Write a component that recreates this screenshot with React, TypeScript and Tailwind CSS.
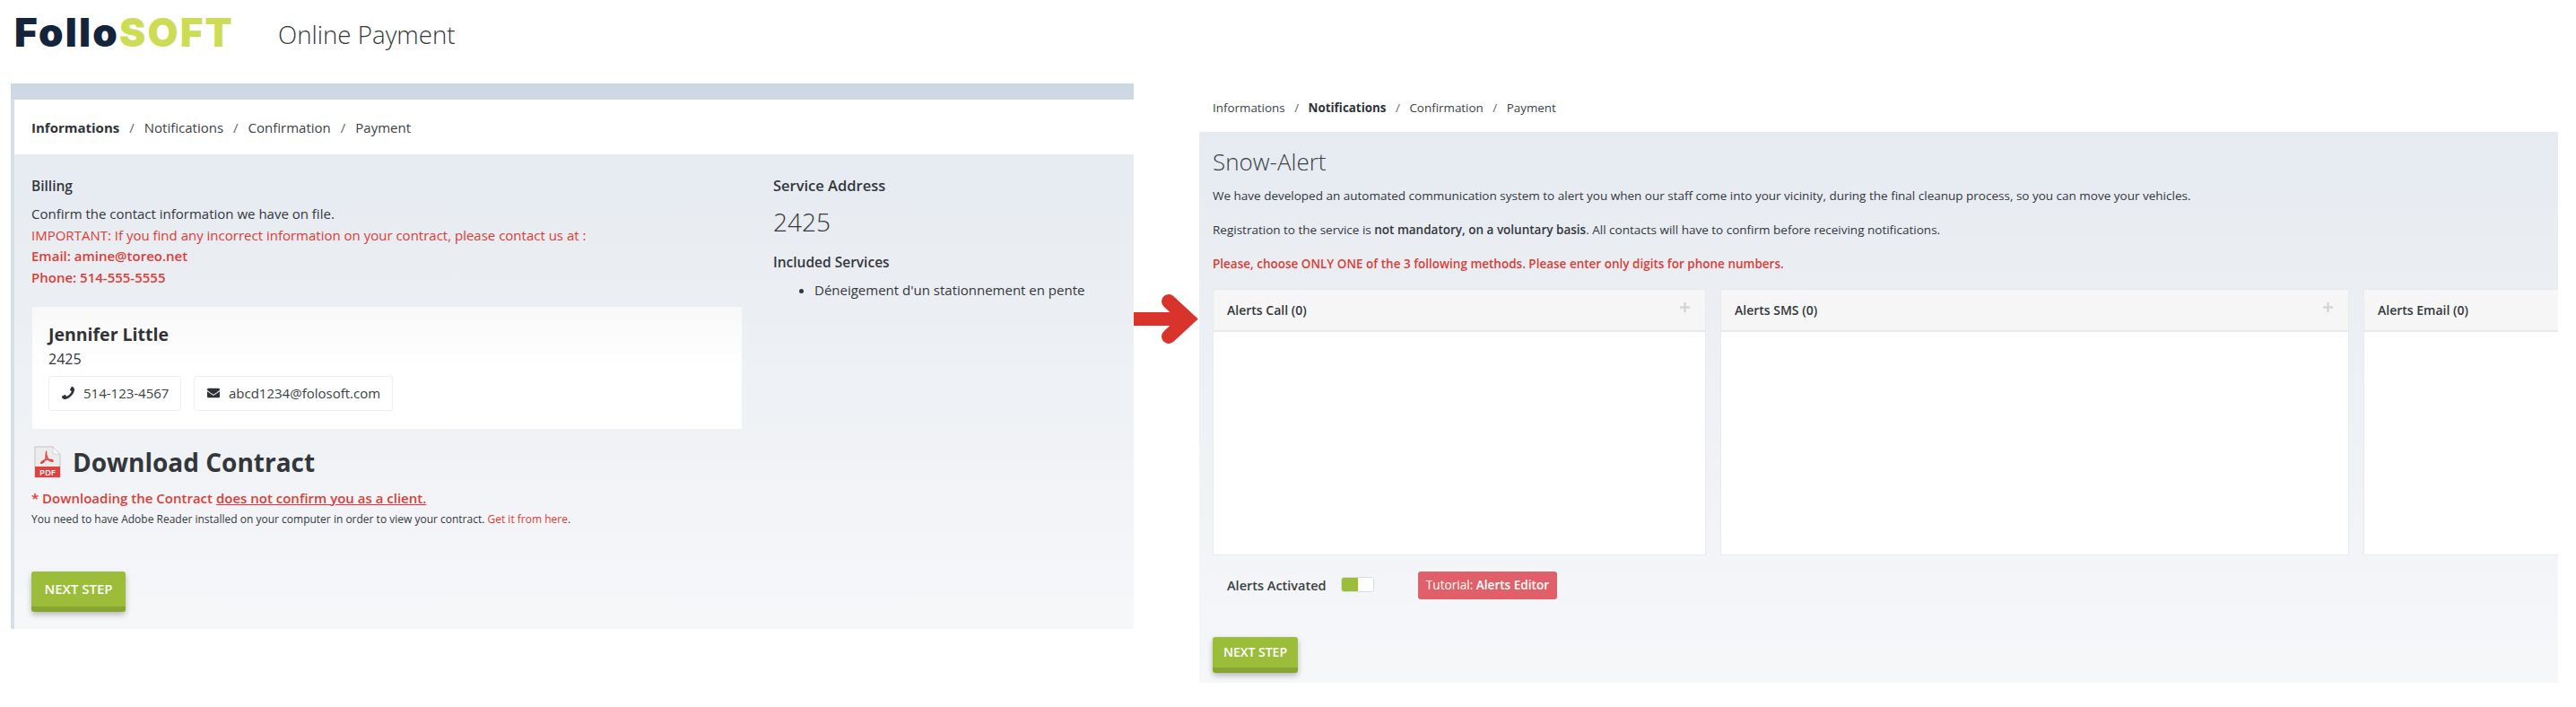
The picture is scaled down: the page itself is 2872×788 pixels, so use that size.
import { FaEnvelope, FaPlus } from "react-icons/fa";

const sans = "font-['Open_Sans','Noto_Sans',sans-serif]";

function Crumbs({ active, small }: { active: number; small?: boolean }) {
  const items = ["Informations", "Notifications", "Confirmation", "Payment"];
  return (
    <div className={(small ? "text-[13.4px]" : "text-[15px]") + " flex items-center leading-5 text-[#3a3f45]"}>
      {items.map((t, i) => (
        <span key={t} className="flex items-center">
          <span className={i === active ? "font-bold text-[#2f3338]" : ""}>{t}</span>
          {i < 3 && <span className={(small ? "mx-[10.5px]" : "mx-[11px]") + " text-[#666]"}>/</span>}
        </span>
      ))}
    </div>
  );
}

function NextStep({ big }: { big?: boolean }) {
  return (
    <button
      className={
        (big ? "w-[105px] h-[45px] text-[15px] pt-[9px] " : "w-[95px] h-[40px] text-[14px] pt-[7px] ") +
        "flex items-start justify-center leading-5 rounded-[3px] bg-[#9bbd3a] border-b-[6px] border-[#86a532] font-semibold text-white shadow-[0_3px_6px_rgba(0,0,0,0.25)]"
      }
    >
      NEXT STEP
    </button>
  );
}

function PhoneIcon() {
  return (
    <svg width="14" height="14" viewBox="0 0 1408 1408" className="text-[#2f3338]">
      <g transform="translate(1408 0) scale(-1 1)">
        <path
          fill="currentColor"
          d="M1408 1112q0 27-10 70.5t-21 68.5q-21 50-122 106-94 51-186 51-27 0-53-3.5t-57.5-12.5-47-14.5-55.5-20.5-49-18q-98-35-175-83-127-79-264-216t-216-264q-48-77-83-175-3-9-18-49t-20.5-55.5-14.5-47-12.5-57.5-3.5-53q0-92 51-186 56-101 106-122 25-11 68.5-21t70.5-10q14 0 21 3 18 6 53 76 11 19 30 54t35 63.5 31 53.5q3 4 17.5 25t21.5 35.5 7 28.5q0 20-28.5 50t-62 55-62 53-28.5 46q0 9 5 22.5t8.5 20.5 14 24 11.5 19q76 137 174 235t235 174q2 1 19 11.5t24 14 20.5 8.5 22.5 5q18 0 46-28.5t53-62 55-62 50-28.5q14 0 28.5 7t35.5 21.5 25 17.5q25 15 53.5 31t63.5 35 54 30q70 35 76 53 3 7 3 21z"
        />
      </g>
    </svg>
  );
}

function PdfIcon() {
  return (
    <svg width="30" height="36" viewBox="0 0 30 36">
      <path d="M1 1h20l8 8v26H1z" fill="#ececec" stroke="#c4c4c4" />
      <path d="M21 1v8h8z" fill="#fafafa" stroke="#c4c4c4" strokeWidth="0.6" />
      <path
        d="M14 6c-1.500 1 0 6-1.500 9.500-1.500 3-4 4.500-5 3.500 1-2 5-4 8.500-4 3 0 5 1 5 2s-4 0-5.500-2.500c-2-3.500-2.500-7.500-1.500-8.500z"
        fill="none"
        stroke="#dc4a46"
        strokeWidth="1.5"
      />
      <rect x="1" y="23" width="28" height="12" fill="#dd4343" />
      <text x="15" y="32.500" textAnchor="middle" fontSize="9.500" fontWeight="600" fill="#fff" fontFamily="Open Sans">PDF</text>
    </svg>
  );
}

function AlertCard({ title, plus, w }: { title: string; plus?: boolean; w: string }) {
  return (
    <div className={w + " shrink-0 bg-white border border-[#e9eaec] flex flex-col h-[297px]"}>
      <div className="h-[47px] bg-[#f6f6f6] border-b-2 border-[#e9eaec] flex items-center justify-between px-[15px]">
        <span className="text-[14px] font-semibold text-[#33373c]">{title}</span>
        {plus && <FaPlus className="text-[#d5d5d5] mb-[6px] mr-[1px]" size={13} />}
      </div>
    </div>
  );
}

export default function App() {
  return (
    <div className={sans + " w-[2872px] h-[788px] bg-white flex items-start pl-3 overflow-hidden"}>
      {/* Left column */}
      <div className="w-[1252px] shrink-0">
        <header className="h-[93px] flex items-start pl-[4px] pt-[12px]">
          <div className="w-[294px] text-[44px] leading-[48px] font-black tracking-[2.2px] font-['Inter',sans-serif]">
            <span className="text-[#14243b]">Follo</span>
            <span className="text-[#cddc55]">SOFT</span>
          </div>
          <div className="text-[27.7px] leading-[48px] font-light text-[#33373c] mt-[2px]">Online Payment</div>
        </header>
        <div className="h-[18px] bg-[#cdd8e4]" />
        <div className="border-l-4 border-[#d6e0ea]">
          <div className="h-[61px] bg-white flex items-center pl-[19px]">
            <Crumbs active={0} />
          </div>
          <div className="h-[529px] bg-gradient-to-b from-[#e6ebf1] via-[#eef1f5] to-[#f6f7f9] flex pl-[19px]">
            <div className="w-[826px] shrink-0 pt-[23px]">
              <div className="text-[15.5px] leading-6 font-semibold text-[#33373c]">Billing</div>
              <div className="mt-[8px] text-[15px] leading-[23.7px] text-[#33373c]">
                <div>Confirm the contact information we have on file.</div>
                <div className="text-[#dc3c36]">IMPORTANT: If you find any incorrect information on your contract, please contact us at :</div>
                <div className="text-[#dc3c36] font-semibold">Email: amine@toreo.net</div>
                <div className="text-[#dc3c36] font-semibold">Phone: 514-555-5555</div>
              </div>
              <div className="mt-[20px] ml-[1px] w-[791px] h-[136px] bg-gradient-to-b from-[#f8f8f8] via-white to-white pl-[18px] pt-[17px]">
                <div className="text-[19.5px] leading-7 font-bold text-[#2f3338]">Jennifer Little</div>
                <div className="text-[16px] leading-6 text-[#33373c] mt-[1px]">2425</div>
                <div className="mt-[7px] flex gap-[14px]">
                  <div className="w-[148px] h-[39px] bg-white border border-[#eeeeee] rounded-[3px] flex items-center pl-[14px] gap-[10px] text-[15px] text-[#3a3f45]">
                    <PhoneIcon />
                    514-123-4567
                  </div>
                  <div className="w-[222px] h-[39px] bg-white border border-[#eeeeee] rounded-[3px] flex items-center pl-[14px] gap-[10px] text-[15px] text-[#3a3f45]">
                    <FaEnvelope size={14} className="text-[#2f3338]" />
                    abcd1234@folosoft.com
                  </div>
                </div>
              </div>
              <div className="mt-[19px] ml-[3px] flex items-center gap-[13px] h-[36px]">
                <PdfIcon />
                <div className="text-[28px] font-bold text-[#33373c] leading-9">Download Contract</div>
              </div>
              <div className="mt-[12px] text-[15px] leading-5 font-semibold text-[#dc3c36]">
                * Downloading the Contract <span className="underline">does not confirm you as a client.</span>
              </div>
              <div className="mt-[5px] text-[12px] leading-[18px] text-[#33373c]">
                You need to have Adobe Reader installed on your computer in order to view your contract.{" "}
                <span className="text-[#dc3c36]">Get it from here</span>.
              </div>
              <div className="mt-[49px]">
                <NextStep big />
              </div>
            </div>
            <div className="pl-[1px] pt-[23px]">
              <div className="text-[16.5px] leading-6 font-semibold text-[#33373c]">Service Address</div>
              <div className="mt-[8px] text-[28px] leading-10 font-light text-[#33373c]">2425</div>
              <div className="mt-[13px] text-[15.5px] leading-6 font-semibold text-[#33373c]">Included Services</div>
              <ul className="mt-[7px] ml-[46px] list-disc text-[15px] leading-6 text-[#33373c]">
                <li>Déneigement d'un stationnement en pente</li>
              </ul>
            </div>
          </div>
        </div>
      </div>

      {/* Arrow */}
      <svg className="shrink-0 mt-[328px]" width="73" height="55" viewBox="0 0 73 55">
        <rect x="0" y="20" width="50" height="15" fill="#d9342b" />
        <path d="M39 8 L60 27.500 L39 47" fill="none" stroke="#d9342b" strokeWidth="16" strokeLinecap="round" strokeLinejoin="miter" />
      </svg>

      {/* Right column */}
      <div className="w-[1515px] shrink-0">
        <div className="h-[147px] pt-[110px] pl-[15px]">
          <Crumbs active={1} small />
        </div>
        <div className="h-[614px] bg-gradient-to-b from-[#e6ebf1] via-[#eef1f5] to-[#f6f7f9] pl-[15px] overflow-hidden">
          <h2 className="pt-[15px] text-[26px] leading-9 font-light text-[#3a3f45]">Snow-Alert</h2>
          <p className="mt-[10px] text-[13.5px] leading-5 text-[#33373c]">
            We have developed an automated communication system to alert you when our staff come into your vicinity, during the final cleanup process, so you can move your vehicles.
          </p>
          <p className="mt-[18px] text-[13.5px] leading-5 text-[#33373c]">
            Registration to the service is <b className="font-semibold">not mandatory, on a voluntary basis</b>. All contacts will have to confirm before receiving notifications.
          </p>
          <p className="mt-[18px] text-[13.5px] leading-5 font-semibold text-[#dc3c36]">
            Please, choose ONLY ONE of the 3 following methods. Please enter only digits for phone numbers.
          </p>
          <div className="mt-[18px] flex gap-[16px]">
            <AlertCard title="Alerts Call (0)" plus w="w-[550px]" />
            <AlertCard title="Alerts SMS (0)" plus w="w-[701px]" />
            <AlertCard title="Alerts Email (0)" w="w-[400px]" />
          </div>
          <div className="mt-[18px] flex items-center h-[31px]">
            <span className="ml-[16px] w-[127px] text-[14.5px] font-semibold text-[#3a3f45]">Alerts Activated</span>
            <span className="w-[37px] h-[17px] flex rounded-[3px] border border-[#dddddd] bg-white overflow-hidden -mt-[3px]">
              <span className="w-[18px] bg-[#9bbd3a]" />
            </span>
            <span className="ml-[49px] w-[155px] h-[31px] rounded-[3px] bg-[#e05f68] text-white text-[13.6px] flex items-center justify-center">
              Tutorial:&nbsp;<span className="font-semibold">Alerts Editor</span>
            </span>
          </div>
          <div className="mt-[42px]">
            <NextStep />
          </div>
        </div>
      </div>
    </div>
  );
}
